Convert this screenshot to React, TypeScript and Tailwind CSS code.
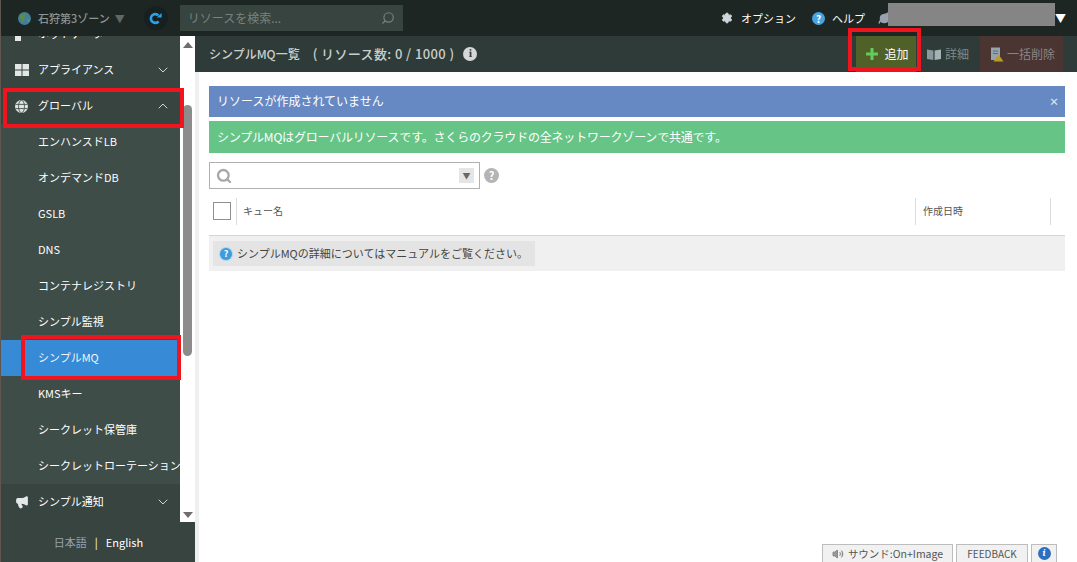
import { ChevronDown, ChevronUp, Megaphone, Search, Settings, Volume2, Leaf } from 'lucide-react';

const font = { fontFamily: '"Noto Sans CJK JP", "Liberation Sans", sans-serif' };

const subItems = ['エンハンスドLB', 'オンデマンドDB', 'GSLB', 'DNS', 'コンテナレジストリ', 'シンプル監視', 'シンプルMQ', 'KMSキー', 'シークレット保管庫', 'シークレットローテーション'];

function GridIcon() {
  return (
    <svg width="14" height="12" viewBox="0 0 14 12" className="fill-[#e2e6e4]">
      <rect x="0" y="0" width="6.5" height="5.5" />
      <rect x="7.5" y="0" width="6.5" height="5.5" />
      <rect x="0" y="6.5" width="6.5" height="5.5" />
      <rect x="7.5" y="6.5" width="6.5" height="5.5" />
    </svg>
  );
}

function GlobeIcon() {
  return (
    <svg width="13" height="13" viewBox="0 0 13 13">
      <circle cx="6.5" cy="6.5" r="6.5" fill="#dfe3e1" />
      <ellipse cx="6.5" cy="6.5" rx="3" ry="6.2" fill="none" stroke="#45524e" strokeWidth="0.9" />
      <path d="M0.5 4.4H12.5M0.5 8.6H12.5" stroke="#45524e" strokeWidth="0.9" />
    </svg>
  );
}

function EarthIcon() {
  return (
    <svg width="13" height="13" viewBox="0 0 13 13">
      <circle cx="6.5" cy="6.5" r="6.5" fill="#3f7f9c" />
      <path d="M2 3C4 1 7 1 8 2.5C8 4.5 6 5 6.5 7C6.5 9 5 10.5 4 9.5C3.5 8 2 7 1.5 5.5Z" fill="#5f8a4e" />
      <path d="M9 7.5L11.5 6.5L11 9.5L9.5 10.5Z" fill="#6c8f58" />
    </svg>
  );
}

function RefreshIcon() {
  return (
    <svg width="13" height="13" viewBox="0 0 13 13">
      <path d="M9.6 9.4A4.4 4.4 0 1 1 9.4 3.4" fill="none" stroke="#2fa0e4" strokeWidth="2.6" />
      <path d="M7.8 5.6H12.6V0.9Z" fill="#2fa0e4" />
    </svg>
  );
}

function BookIcon() {
  return (
    <svg width="14" height="11" viewBox="0 0 14 11">
      <path d="M0 0.5L6.4 1.5V11L0 10Z" fill="#8a9a9c" />
      <path d="M14 0.5L7.6 1.5V11L14 10Z" fill="#a5b3b5" />
    </svg>
  );
}

function BulkDeleteIcon() {
  return (
    <svg width="14" height="15" viewBox="0 0 14 15">
      <rect x="1" y="0.5" width="9" height="12.5" fill="#96a2ac" />
      <path d="M3 4H8M3 6.5H8" stroke="#5a6c88" />
      <path d="M8.5 7.5L13.5 14.5H3.5Z" fill="#b99f26" />
    </svg>
  );
}

function TopItem({ icon, label, open }: { icon: React.ReactNode; label: string; open?: boolean }) {
  return (
    <div className="flex h-9 shrink-0 items-center pl-[15px] pr-[9px] text-[11px] text-white">
      <span className="flex w-[23px] justify-start">{icon}</span>
      <span className="flex-1 pb-[1px]">{label}</span>
      {open ? <ChevronUp className="h-4 w-4 text-gray-300" strokeWidth={1.5} /> : <ChevronDown className="h-4 w-4 text-gray-300" strokeWidth={1.5} />}
    </div>
  );
}

function Sidebar() {
  return (
    <aside className="flex w-[195px] shrink-0 flex-col bg-[#37443f]">
      <div className="relative flex h-[486px] overflow-hidden">
        <div className="flex w-[180px] shrink-0 flex-col">
          <div className="-mt-5 flex flex-col">
            <TopItem icon={<span className="block h-3.5 w-1.5 bg-gray-200" />} label="ホットデータ" />
            <TopItem icon={<GridIcon />} label="アプライアンス" />
            <TopItem icon={<GlobeIcon />} label="グローバル" open />
            <div className="flex flex-col bg-[#3f4d48]">
              {subItems.map((s) => (
                <div
                  key={s}
                  className={`flex h-9 shrink-0 items-center whitespace-nowrap pb-[1px] pl-[38px] text-[11px] ${s === 'シンプルMQ' ? 'bg-[#368ad6] text-gray-100' : 'text-white'}`}
                >
                  {s}
                </div>
              ))}
            </div>
            <TopItem icon={<Megaphone className="h-3.5 w-3.5 fill-gray-200 text-gray-200" />} label="シンプル通知" />
          </div>
        </div>
        <div className="flex w-[15px] shrink-0 flex-col items-center bg-white pb-1 pt-[6px]">
          <span className="h-0 w-0 border-x-[5px] border-b-[6px] border-x-transparent border-b-[#6e6e6e]" />
          <span className="mb-[156px] mt-[57px] w-[9px] flex-1 rounded-full bg-[#8c8c8c]" />
          <span className="h-0 w-0 border-x-[5px] border-t-[6px] border-x-transparent border-t-[#6e6e6e]" />
        </div>
      </div>
      <div className="flex flex-1 items-center justify-center pl-[2px] pt-[1px] text-[11px] text-white">
        <span className="text-gray-400">日本語</span>
        <span className="mx-2">|</span>
        <span>English</span>
      </div>
    </aside>
  );
}

function Header() {
  return (
    <header className="flex h-9 shrink-0 items-center bg-[#1e2624] pl-[18px] text-[12px] text-white">
      <EarthIcon />
      <span className="ml-[7px] text-[11px] font-medium text-[#8d9592]">石狩第3ゾーン</span>
      <span className="ml-[5px] text-[10px] text-[#5e6864]">▼</span>
      <span className="ml-[19px] flex h-[24px] w-[24px] items-center justify-center rounded-full bg-[#172020]">
        <RefreshIcon />
      </span>
      <div className="ml-[12px] flex h-[26px] w-[223px] items-center justify-between bg-[#37443f] pl-2 pr-2 text-[#77827e]">
        <span>リソースを検索...</span>
        <Search className="h-3.5 w-3.5 -scale-x-100 text-[#77827e]" />
      </div>
      <div className="ml-auto flex items-center pr-[11px] text-[11px]">
        <Settings className="h-3 w-3 fill-gray-300 text-gray-300" />
        <span className="ml-[8px]">オプション</span>
        <span className="ml-[16px] flex h-[13px] w-[13px] items-center justify-center rounded-full bg-[#4aa3df] text-[10px] font-bold">?</span>
        <span className="ml-[7px]">ヘルプ</span>
        <Leaf className="ml-[13px] h-3.5 w-3.5 fill-gray-400 text-gray-400" />
        <span className="-ml-1 -mt-2 h-[23px] w-[167px] bg-[#858585]" />
        <span className="text-[11px]">▼</span>
      </div>
    </header>
  );
}

function Toolbar() {
  return (
    <div className="flex h-9 shrink-0 items-center justify-between bg-[#2f3b38] pl-[14px] pr-[14px]">
      <div className="flex items-center font-medium text-[#c9cfcc]">
        <span className="text-[12px]">シンプルMQ一覧</span>
        <span className="ml-[13px] text-[13px] tracking-[0.4px]">( リソース数: 0 / 1000 )</span>
        <span className="ml-[9px] flex h-[14px] w-[14px] items-center justify-center rounded-full bg-[#d5d8d6] font-serif text-[11px] font-bold text-[#2f3b38]">i</span>
      </div>
      <div className="flex h-full items-stretch text-[12px]">
        <div className="flex w-[60px] items-center justify-center gap-[6px] bg-[#4f6029] pl-[3px] text-white">
          <svg width="12" height="12" viewBox="0 0 12 12" className="fill-[#62cc5c]">
            <path d="M4.5 0H7.5V4.5H12V7.5H7.5V12H4.5V7.5H0V4.5H4.5Z" />
          </svg>
          <span>追加</span>
        </div>
        <div className="flex w-[64px] items-center justify-center gap-[4px] text-[#7f8a86]">
          <BookIcon />
          <span>詳細</span>
        </div>
        <div className="flex w-[83px] items-center justify-center gap-[3px] bg-[#4a3533] pl-[2px] text-[#8a8583]">
          <BulkDeleteIcon />
          <span>一括削除</span>
        </div>
      </div>
    </div>
  );
}

function Content() {
  return (
    <div className="flex flex-1 bg-white">
      <div className="w-1 shrink-0 bg-[#efefef]" />
      <div className="flex flex-1 flex-col pl-[10px] pr-3 pt-[14px]">
        <div className="flex h-[31px] items-center justify-between bg-[#6688c3] pb-[1px] pl-2 pr-[6px] text-[12px] text-white">
          <span>リソースが作成されていません</span>
          <span className="text-[10px] font-bold text-gray-200">×</span>
        </div>
        <div className="mt-1 flex h-8 items-center bg-[#66c486] pb-[1px] pl-2 text-[12px] tracking-[-0.2px] text-white">
          シンプルMQはグローバルリソースです。さくらのクラウドの全ネットワークゾーンで共通です。
        </div>
        <div className="mt-[9px] flex items-center">
          <div className="flex h-[27px] w-[271px] items-center justify-between border border-[#b0b0b0] pl-[6px] pr-[5px]">
            <Search className="h-4 w-4 text-[#a9a9a9]" strokeWidth={3.5} />
            <span className="flex h-[15px] w-[15px] items-center justify-center bg-[#e4e6e6] text-[8px] text-[#666]">▼</span>
          </div>
          <span className="ml-1 flex h-[15px] w-[15px] items-center justify-center rounded-full bg-[#b4b4b4] text-[11px] font-bold text-white">?</span>
        </div>
        <div className="mt-[9px] flex h-[27px] items-center text-[10px] text-[#555]">
          <span className="-mt-[2px] ml-1 h-[18px] w-[18px] border border-[#8f8f8f]" />
          <span className="ml-[5px] h-full w-px bg-[#dcdcdc]" />
          <span className="ml-[6px] flex-1 pb-[3px]">キュー名</span>
          <span className="h-full w-px bg-[#dcdcdc]" />
          <span className="ml-[7px] w-[127px] pb-[3px]">作成日時</span>
          <span className="h-full w-px bg-[#dcdcdc]" />
          <span className="w-[14px]" />
        </div>
        <div className="mt-[10px] h-[36px] border-t border-[#d5d5d5] bg-[#f0f0f0] pl-1 pt-[5px]">
          <div className="flex h-[25px] w-[322px] items-center bg-[#e4e4e4] pl-[7px] text-[11px] text-[#444]">
            <span className="flex h-[12px] w-[12px] items-center justify-center rounded-full bg-[#3f9bd9] text-[9px] font-bold text-white ring-1 ring-[#a9d6f2]">?</span>
            <span className="ml-[5px]">シンプルMQの詳細についてはマニュアルをご覧ください。</span>
          </div>
        </div>
        <div className="mt-auto flex justify-end gap-[3px] pr-[8px] text-[10px] text-[#555]">
          <div className="flex h-[18px] w-[131px] items-center justify-center gap-[4px] border border-b-0 border-[#bdbdbd] bg-[#f1f1f1] text-[10.5px]">
            <Volume2 className="h-3 w-3 fill-[#999] text-[#888]" />
            <span>サウンド:On+Image</span>
          </div>
          <div className="flex h-[18px] w-[72px] items-center justify-center border border-b-0 border-[#bdbdbd] bg-[#f1f1f1]">FEEDBACK</div>
          <div className="flex h-[18px] w-[26px] items-center justify-center border border-b-0 border-[#bdbdbd] bg-[#f1f1f1]">
            <span className="flex h-[13px] w-[13px] items-center justify-center rounded-full bg-[#2a6fc0] font-serif text-[10px] font-bold italic text-white">i</span>
          </div>
        </div>
      </div>
    </div>
  );
}

export default function App() {
  return (
    <div className="relative flex h-[562px] w-[1077px] flex-col overflow-hidden bg-white" style={font}>
      <Header />
      <div className="flex min-h-0 flex-1">
        <Sidebar />
        <main className="flex flex-1 flex-col">
          <Toolbar />
          <Content />
        </main>
      </div>
      {/* red annotation boxes on top of the screenshot */}
      <div className="absolute left-[3px] top-[88px] h-[40px] w-[181px] border-[4px] border-[#f0141e]" />
      <div className="absolute left-[21px] top-[335px] h-[45px] w-[160px] border-[4px] border-[#f0141e]" />
      <div className="absolute left-[848px] top-[28px] h-[43px] w-[73px] border-[4px] border-[#f0141e]" />
      <div className="absolute bottom-0 left-0 top-0 w-px bg-[#5f564e]" />
    </div>
  );
}
